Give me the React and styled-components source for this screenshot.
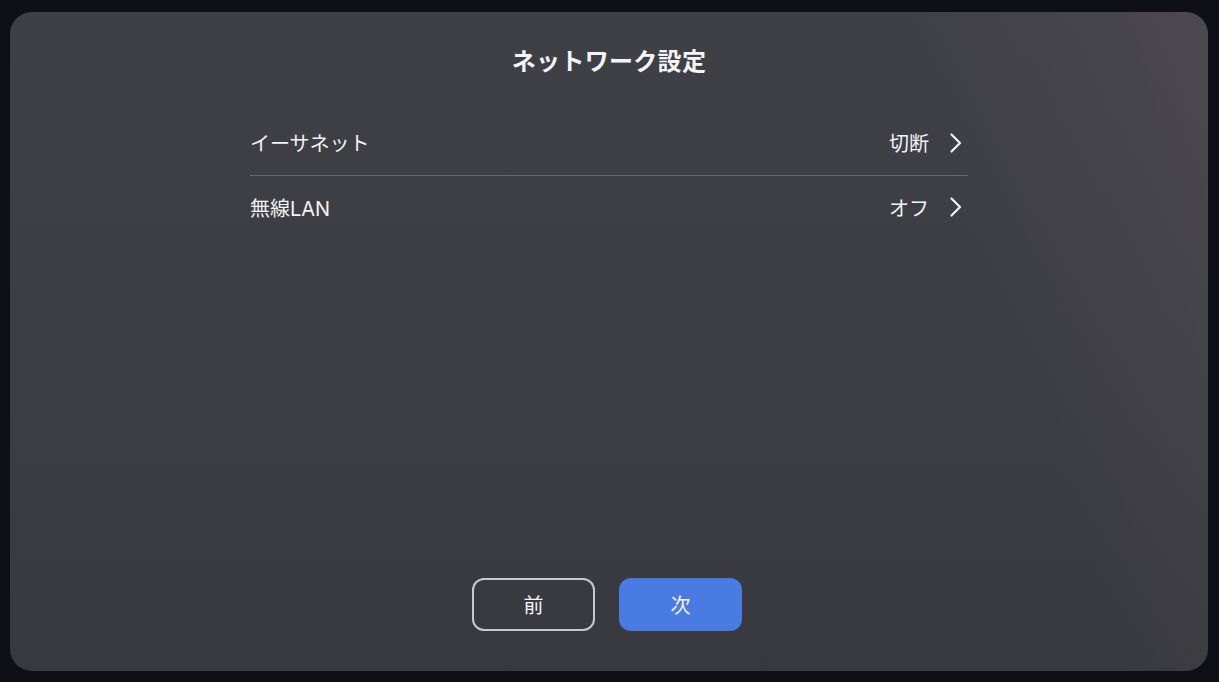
import React from 'react'
import styled, { createGlobalStyle } from 'styled-components'

const rows = [
  { label: 'イーサネット', value: '切断' },
  { label: '無線LAN', value: 'オフ' },
]

const GlobalStyle = createGlobalStyle`
  html, body {
    margin: 0;
    padding: 0;
    background: #0f0f17;
  }
  body {
    font-family: Inter, "Noto Sans CJK JP", sans-serif;
  }
`

function Chevron() {
  return (
    <svg width="16" height="22" viewBox="0 0 16 22" fill="none">
      <path d="M3.5 2.5 L12 11 L3.5 19.5" stroke="#f2f2f4" strokeWidth="2.2" strokeLinecap="round" strokeLinejoin="round" />
    </svg>
  )
}

export default function App() {
  return (
    <Screen>
      <GlobalStyle />
      <Panel>
        <Title>ネットワーク設定</Title>
        <List>
          {rows.map((row) => (
            <Row key={row.label}>
              <Label>{row.label}</Label>
              <Value>
                {row.value}
                <Chevron />
              </Value>
            </Row>
          ))}
        </List>
        <Footer>
          <Button type="button">前</Button>
          <Button type="button" primary>次</Button>
        </Footer>
      </Panel>
    </Screen>
  )
}

const Screen = styled.div`
  width: 1219px;
  height: 682px;
  box-sizing: border-box;
  padding: 12px 11px 11px 10px;
  background: #0f0f17;
  display: flex;
`

const Panel = styled.div`
  flex: 1;
  display: flex;
  flex-direction: column;
  align-items: center;
  box-sizing: border-box;
  padding: 34px 0 40px;
  border-radius: 22px;
  background:
    linear-gradient(250deg, rgba(84, 77, 86, 0.6) 0%, rgba(84, 77, 86, 0) 22%),
    linear-gradient(180deg, #3f4046 0%, #3c3d43 60%, #38393e 100%);
`

const Title = styled.h1`
  margin: 0;
  font-size: 24px;
  line-height: 32px;
  font-weight: 700;
  color: #f4f4f6;
  letter-spacing: 0.3px;
`

const List = styled.div`
  width: 718px;
  margin-top: 33px;
  display: flex;
  flex-direction: column;
`

const Row = styled.div`
  height: 64px;
  display: flex;
  align-items: center;
  justify-content: space-between;
  padding-bottom: 1px;
  box-sizing: border-box;
  & + & {
    border-top: 1px solid #66676c;
  }
`

const Label = styled.span`
  font-size: 20px;
  color: #f2f2f4;
`

const Value = styled.span`
  display: flex;
  align-items: center;
  gap: 19px;
  font-size: 20px;
  color: #f2f2f4;
  padding-right: 4px;
`

const Footer = styled.div`
  margin-top: auto;
  padding-right: 4px;
  display: flex;
  gap: 24px;
`

const Button = styled.button`
  width: 123px;
  height: 53px;
  box-sizing: border-box;
  border-radius: 12px;
  font-family: Inter, "Noto Sans CJK JP", sans-serif;
  font-size: 20px;
  color: #f4f4f6;
  cursor: pointer;
  border: ${(p) => (p.primary ? 'none' : '2px solid #c9c9cc')};
  background: ${(p) => (p.primary ? '#4a7be3' : 'transparent')};
`
